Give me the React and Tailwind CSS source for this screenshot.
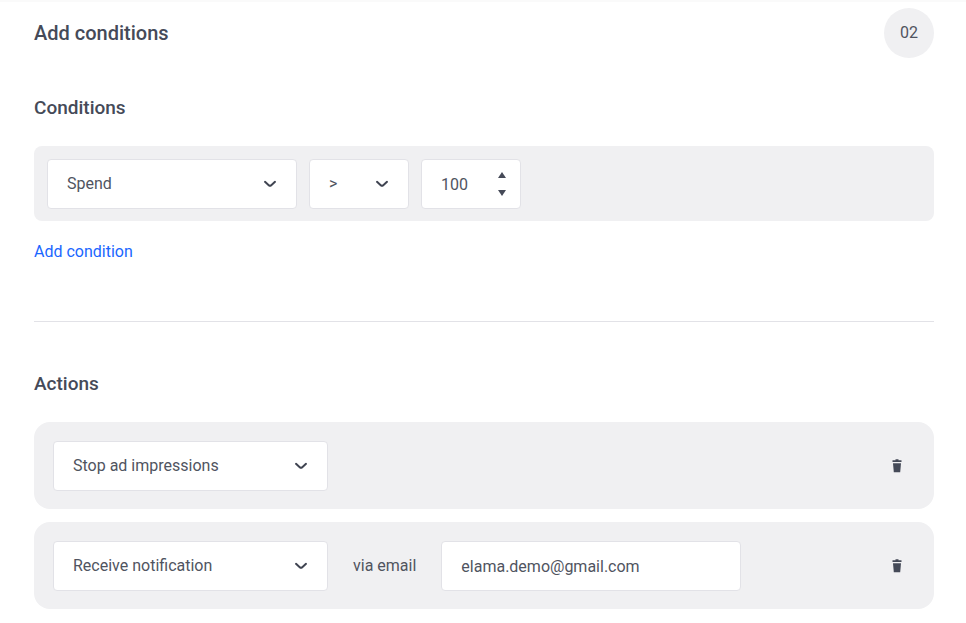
import { useState } from 'react';

const Chevron = () => (
  <svg
    viewBox="0 0 14 8"
    className="pointer-events-none absolute right-5 top-1/2 h-2 w-3.5 -translate-y-1/2"
    fill="none"
    stroke="#3f4451"
    strokeWidth="2"
    strokeLinecap="round"
    strokeLinejoin="round"
    aria-hidden="true"
  >
    <path d="M2 1.8 L6 5.4 Q7 6.2 8 5.4 L12 1.8" />
  </svg>
);

const TrashIcon = () => (
  <svg viewBox="0 0 10 14" className="h-3.5 w-2.5" fill="#454a58" aria-hidden="true">
    <path d="M3.5 0.2 H6.5 V1.2 H9.5 V3 H0.5 V1.2 H3.5 Z" />
    <path d="M1 4.2 H9 L8.2 13.2 H1.8 Z" />
  </svg>
);

const Select = ({ label, value, onChange, options, className }) => (
  <div className={`relative ${className}`}>
    <select
      aria-label={label}
      value={value}
      onChange={(e) => onChange(e.target.value)}
      className="block h-full w-full appearance-none rounded border border-[#e2e2e7] bg-white pl-[19px] pr-10 pb-px text-[#50545f]"
    >
      {options.map((option) => (
        <option key={option}>{option}</option>
      ))}
    </select>
    <Chevron />
  </div>
);

/**
 * Number field with its own step buttons
 */
const NumberField = ({ label, value, onChange }) => (
  <div className="flex h-[50px] w-[100px] items-center rounded border border-[#e2e2e7] bg-white">
    <input
      type="number"
      aria-label={label}
      value={value}
      onChange={(e) => onChange(Number(e.target.value))}
      className="h-full min-w-0 flex-1 bg-transparent pl-[19px] [appearance:textfield] [&::-webkit-inner-spin-button]:appearance-none"
    />
    <div className="mr-[11px] flex flex-col gap-1">
      <button
        type="button"
        aria-label="Increase"
        onClick={() => onChange(value + 1)}
        className="flex h-3.5 w-3.5 items-center justify-center"
      >
        <svg viewBox="0 0 8 6" className="h-1.5 w-2" fill="#454a58">
          <path d="M4 0 L8 6 H0 Z" />
        </svg>
      </button>
      <button
        type="button"
        aria-label="Decrease"
        onClick={() => onChange(value - 1)}
        className="flex h-3.5 w-3.5 items-center justify-center"
      >
        <svg viewBox="0 0 8 6" className="h-1.5 w-2" fill="#454a58">
          <path d="M0 0 H8 L4 6 Z" />
        </svg>
      </button>
    </div>
  </div>
);

const ActionRow = ({ children }) => (
  <div className="flex items-center gap-[25px] rounded-2xl bg-[#f0f0f2] px-[19px] pt-[19px] pb-[18px]">
    {children}
    <button type="button" aria-label="Delete action" className="ml-auto flex h-9 w-9 items-center justify-center">
      <TrashIcon />
    </button>
  </div>
);

const App = () => {
  const [metric, setMetric] = useState('Spend');
  const [operator, setOperator] = useState('>');
  const [amount, setAmount] = useState(100);
  const [firstAction, setFirstAction] = useState('Stop ad impressions');
  const [secondAction, setSecondAction] = useState('Receive notification');
  const [email, setEmail] = useState('elama.demo@gmail.com');

  const actions = ['Stop ad impressions', 'Receive notification'];

  return (
    <main className="min-h-screen border-t-2 border-[#fafafa] bg-white pl-[34px] pr-8 pt-1.5 pb-3.5 font-['Roboto',sans-serif] text-base text-[#50545f]">
      {/* Step header */}
      <header className="flex items-center justify-between">
        <h1 className="text-xl font-medium text-[#454a58]">Add conditions</h1>
        <span className="flex h-[50px] w-[50px] items-center justify-center rounded-full bg-[#f0f0f2]">02</span>
      </header>

      {/* Conditions */}
      <section className="mt-9 border-b border-[#e2e2e7] pb-[57px]">
        <h2 className="text-[19px] leading-7 font-medium text-[#454a58]">Conditions</h2>
        <div className="mt-6 flex flex-wrap gap-3 rounded-lg bg-[#f0f0f2] px-[13px] pt-[13px] pb-3">
          <Select
            label="Metric"
            value={metric}
            onChange={setMetric}
            options={['Spend', 'Clicks', 'Impressions']}
            className="h-[50px] w-[250px]"
          />
          <Select
            label="Operator"
            value={operator}
            onChange={setOperator}
            options={['>', '<', '=']}
            className="h-[50px] w-[100px]"
          />
          <NumberField label="Amount" value={amount} onChange={setAmount} />
        </div>
        <button type="button" className="mt-[19px] block text-[#1a66ff]">
          Add condition
        </button>
      </section>

      {/* Actions */}
      <section className="mt-12">
        <h2 className="text-[19px] leading-7 font-medium text-[#454a58]">Actions</h2>
        <div className="mt-6 flex flex-col gap-[13px]">
          <ActionRow>
            <Select
              label="First action"
              value={firstAction}
              onChange={setFirstAction}
              options={actions}
              className="h-[50px] w-[275px]"
            />
          </ActionRow>
          <ActionRow>
            <Select
              label="Second action"
              value={secondAction}
              onChange={setSecondAction}
              options={actions}
              className="h-[50px] w-[275px]"
            />
            <label htmlFor="email">via email</label>
            <input
              id="email"
              type="email"
              value={email}
              onChange={(e) => setEmail(e.target.value)}
              className="h-[50px] w-[300px] rounded border border-[#e2e2e7] bg-white px-[19px]"
            />
          </ActionRow>
        </div>
      </section>
    </main>
  );
};

export default App;
